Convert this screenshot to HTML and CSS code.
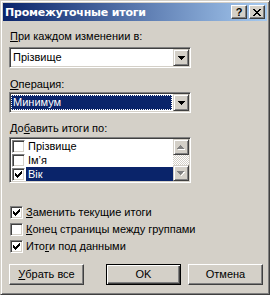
FILE: index.html
```html
<!DOCTYPE html>
<html lang="ru">
<head>
  <meta charset="UTF-8" />
  <title>Промежуточные итоги</title>
  <link rel="stylesheet" href="styles.css">
</head>
<body>
  <div class="window">
    <div class="titlebar">
      <span class="title">Промежуточные итоги</span>
      <span class="cap-btns">
        <span class="cap-btn help">?</span>
        <span class="cap-btn">
          <svg width="8" height="7" viewBox="0 0 8 7" shape-rendering="crispEdges"><path d="M0 0h2v1H0z M6 0h2v1H6z M1 1h2v1H1z M5 1h2v1H5z M2 2h4v1H2z M3 3h2v1H3z M2 4h4v1H2z M1 5h2v1H1z M5 5h2v1H5z M0 6h2v1H0z M6 6h2v1H6z" fill="#000"/></svg>
        </span>
      </span>
    </div>

    <div class="content">
      <div class="label l1"><u>П</u>ри каждом изменении в:</div>
      <div class="combo c1">
        <div class="combo-text">Прізвище</div>
        <div class="drop-btn">
          <svg width="7" height="4" viewBox="0 0 7 4" shape-rendering="crispEdges"><path d="M0 0h7v1H0z M1 1h5v1H1z M2 2h3v1H2z M3 3h1v1H3z" fill="#000"/></svg>
        </div>
      </div>

      <div class="label l2"><u>О</u>перация:</div>
      <div class="combo c2">
        <div class="combo-text selected">Минимум</div>
        <div class="drop-btn">
          <svg width="7" height="4" viewBox="0 0 7 4" shape-rendering="crispEdges"><path d="M0 0h7v1H0z M1 1h5v1H1z M2 2h3v1H2z M3 3h1v1H3z" fill="#000"/></svg>
        </div>
      </div>

      <div class="label l3">До<u>б</u>авить итоги по:</div>
      <div class="listbox">
        <div class="items">
          <div class="item"><span class="check"></span><span class="item-text">Прізвище</span></div>
          <div class="item"><span class="check"></span><span class="item-text">Ім’я</span></div>
          <div class="item"><span class="check"><svg width="7" height="7" viewBox="0 0 7 7" shape-rendering="crispEdges"><path d="M0 2h1v3H0z M1 3h1v3H1z M2 4h1v3H2z M3 3h1v3H3z M4 2h1v3H4z M5 1h1v3H5z M6 0h1v3H6z" fill="#000"/></svg></span><span class="item-text sel">Вік</span></div>
        </div>
        <div class="scrollbar">
          <div class="sb-btn">
            <svg width="8" height="5" viewBox="0 0 8 5" shape-rendering="crispEdges"><path d="M4 1h1v1H4z M5 2h1v1H5z M6 3h1v1H6z M1 4h7v1H1z" fill="#fff"/><path d="M3 0h1v1H3z M2 1h3v1H2z M1 2h5v1H1z M0 3h7v1H0z" fill="#808080"/></svg>
          </div>
          <div class="sb-track"></div>
          <div class="sb-btn">
            <svg width="8" height="5" viewBox="0 0 8 5" shape-rendering="crispEdges"><path d="M1 1h7v1H1z M2 2h1v1H2z M6 2h1v1H6z M5 3h1v1H5z M4 4h1v1H4z" fill="#fff"/><path d="M0 0h7v1H0z M1 1h5v1H1z M2 2h3v1H2z M3 3h1v1H3z" fill="#808080"/></svg>
          </div>
        </div>
      </div>

      <div class="options">
        <div class="opt"><span class="check"><svg width="7" height="7" viewBox="0 0 7 7" shape-rendering="crispEdges"><path d="M0 2h1v3H0z M1 3h1v3H1z M2 4h1v3H2z M3 3h1v3H3z M4 2h1v3H4z M5 1h1v3H5z M6 0h1v3H6z" fill="#000"/></svg></span><span><u>З</u>аменить текущие итоги</span></div>
        <div class="opt"><span class="check"></span><span><u>К</u>онец страницы между группами</span></div>
        <div class="opt"><span class="check"><svg width="7" height="7" viewBox="0 0 7 7" shape-rendering="crispEdges"><path d="M0 2h1v3H0z M1 3h1v3H1z M2 4h1v3H2z M3 3h1v3H3z M4 2h1v3H4z M5 1h1v3H5z M6 0h1v3H6z" fill="#000"/></svg></span><span>Ито<u>г</u>и под данными</span></div>
      </div>

      <div class="buttons">
        <div class="btn"><u>У</u>брать все</div>
        <div class="btn default"><span>OK</span></div>
        <div class="btn cancel">Отмена</div>
      </div>
    </div>
  </div>
</body>
</html>
```

FILE: styles.css
```css
body {
  margin: 0;
  background-color: #d4d0c8;
  font-family: "Liberation Sans", Arial, sans-serif;
  font-size: 11px;
  line-height: 13px;
  color: #000;
}

.window {
  width: 270px;
  height: 295px;
  box-sizing: border-box;
  background-color: #d4d0c8;
  border: 1px solid;
  border-color: #d4d0c8 #404040 #404040 #d4d0c8;
  box-shadow: inset 1px 1px #fff, inset -1px -1px #808080;
  padding: 2px;
}

/* title bar */
.titlebar {
  height: 18px;
  display: flex;
  align-items: center;
  justify-content: space-between;
  padding: 0 2px 0 2px;
  background: linear-gradient(to right, #0a246a, #a6caf0);
}

.title {
  color: #fff;
  font-family: "DejaVu Sans", sans-serif;
  font-weight: bold;
  font-size: 11px;
  letter-spacing: -0.2px;
}

.cap-btns {
  display: flex;
  gap: 2px;
}

.cap-btn {
  width: 16px;
  height: 14px;
  box-sizing: border-box;
  display: flex;
  align-items: center;
  justify-content: center;
  background-color: #d4d0c8;
  border: 1px solid;
  border-color: #fff #404040 #404040 #fff;
  box-shadow: inset -1px -1px #808080;
}

.cap-btn.help {
  font-weight: bold;
  font-size: 11px;
  line-height: 12px;
}

/* dialog body */
.content {
  padding-left: 6px;
}

.label {
  padding-left: 1px;
}

.l1 { margin-top: 9px; }
.l2 { margin-top: 10px; }
.l3 { margin-top: 9px; }

.combo,
.listbox {
  width: 182px;
  box-sizing: border-box;
  display: flex;
  background-color: #fff;
  border: 1px solid;
  border-color: #808080 #fff #fff #808080;
  box-shadow: inset 1px 1px #404040, inset -1px -1px #d4d0c8;
  padding: 1px;
}

.combo {
  height: 21px;
}

.c1 { margin-top: 4px; }
.c2 { margin-top: 1px; }

.combo-text {
  flex: 1;
  padding-left: 2px;
  line-height: 17px;
}

.combo-text.selected {
  margin: 1px 1px 1px 0;
  padding-left: 1px;
  line-height: 13px;
  background-color: #0a246a;
  color: #fff;
  border: 1px dotted #fff;
}

.drop-btn,
.sb-btn {
  width: 16px;
  box-sizing: border-box;
  display: flex;
  align-items: center;
  justify-content: center;
  background-color: #d4d0c8;
  border: 1px solid;
  border-color: #d4d0c8 #404040 #404040 #d4d0c8;
  box-shadow: inset 1px 1px #fff, inset -1px -1px #808080;
}

.drop-btn {
  height: 17px;
}

.drop-btn svg {
  margin-top: 1px;
}

/* list with checkboxes */
.listbox {
  height: 46px;
  margin-top: 2px;
}

.items {
  flex: 1;
}

.item {
  height: 14px;
  display: flex;
  align-items: flex-start;
}

.item .check {
  margin: 1px 1px 0 1px;
}

.item-text {
  flex: 1;
  height: 14px;
  padding-left: 2px;
  line-height: 14px;
}

.item-text.sel {
  background-color: #0a246a;
  color: #fff;
}

.scrollbar {
  width: 16px;
  display: flex;
  flex-direction: column;
}

.sb-btn {
  height: 16px;
}

.sb-track {
  flex: 1;
  background: repeating-conic-gradient(#fff 0 25%, #d4d0c8 0 50%) 0 0 / 2px 2px;
}

/* checkboxes */
.check {
  width: 13px;
  height: 13px;
  box-sizing: border-box;
  flex-shrink: 0;
  display: flex;
  align-items: center;
  justify-content: center;
  background-color: #fff;
  border: 1px solid;
  border-color: #808080 #fff #fff #808080;
  box-shadow: inset 1px 1px #404040, inset -1px -1px #d4d0c8;
}

.options {
  margin-top: 23px;
}

.opt {
  height: 17px;
  display: flex;
  align-items: flex-start;
  gap: 3px;
  padding-left: 1px;
}

/* buttons */
.buttons {
  display: flex;
  margin-top: 7px;
}

.btn {
  width: 75px;
  height: 21px;
  box-sizing: border-box;
  display: flex;
  align-items: center;
  justify-content: center;
  background-color: #d4d0c8;
  border: 1px solid;
  border-color: #fff #404040 #404040 #fff;
  box-shadow: inset -1px -1px #808080;
}

.btn.default {
  margin-left: 22px;
  border: 1px solid #000;
  box-shadow: inset 1px 1px #fff, inset -1px -1px #404040, inset -2px -2px #808080;
}

.btn.cancel {
  margin-left: 7px;
}
```
